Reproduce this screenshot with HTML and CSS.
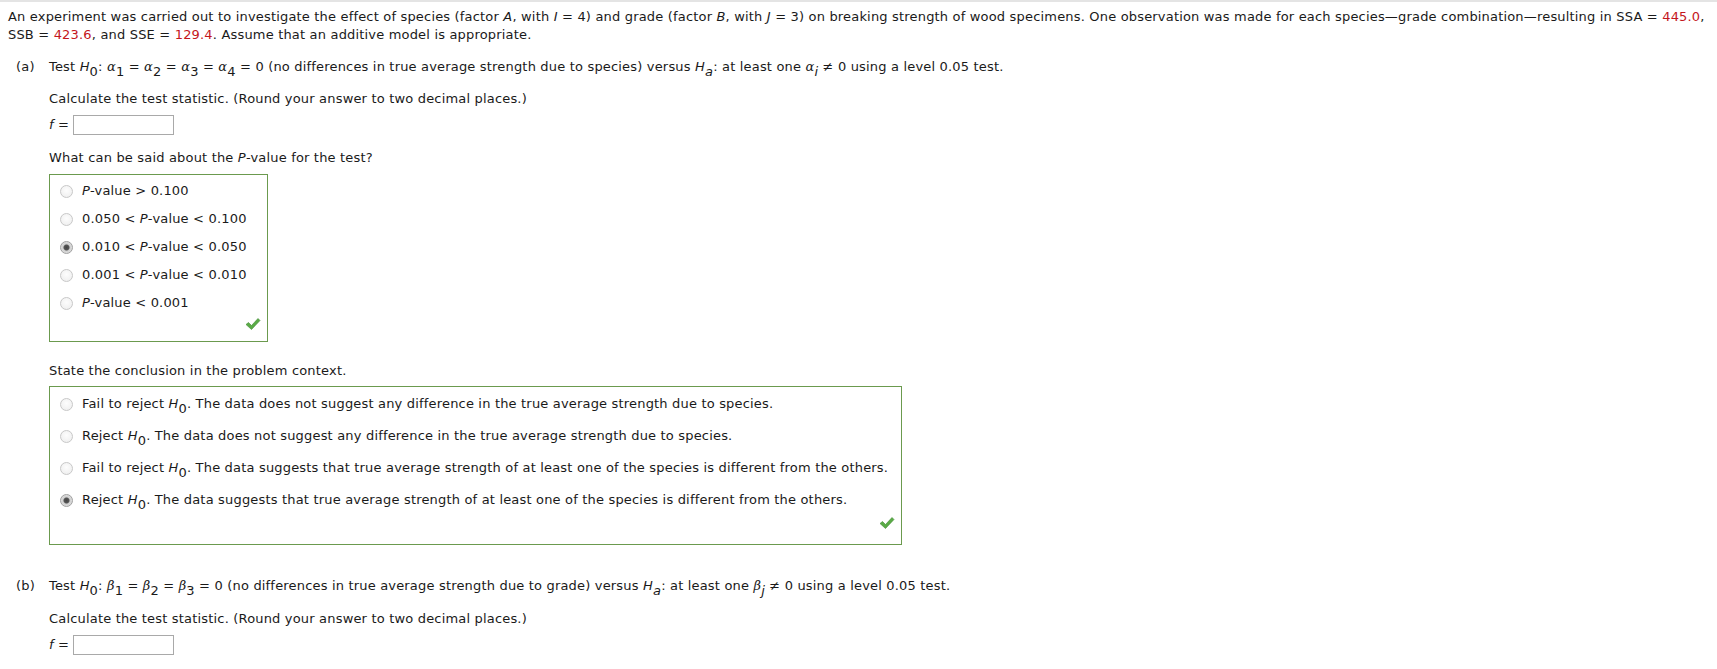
FILE: index.html
```html
<!DOCTYPE html>
<html>
<head>
<meta charset="utf-8">
<link rel="stylesheet" href="styles.css">
</head>
<body>
<div class="rule"></div>
<div class="page">
  <p class="intro">An experiment was carried out to investigate the effect of species (factor <i>A</i>, with <i>I</i> = 4) and grade (factor <i>B</i>, with <i>J</i> = 3) on breaking strength of wood specimens. One observation was made for each species—grade combination—resulting in SSA = <span class="red">445.0</span>,<br>SSB = <span class="red">423.6</span>, and SSE = <span class="red">129.4</span>. Assume that an additive model is appropriate.</p>

  <div class="part part-a">
    <div class="label">(a)</div>
    <div class="body">
      <p class="q">Test <i>H</i><sub>0</sub>: <i class="gk">α</i><sub>1</sub> = <i class="gk">α</i><sub>2</sub> = <i class="gk">α</i><sub>3</sub> = <i class="gk">α</i><sub>4</sub> = 0 (no differences in true average strength due to species) versus <i>H</i><sub><i>a</i></sub>: at least one <i class="gk">α</i><sub><i>i</i></sub> ≠ 0 using a level 0.05 test.</p>
      <p class="calc">Calculate the test statistic. (Round your answer to two decimal places.)</p>
      <div class="frow"><span class="flabel"><i>f</i> = </span><span class="input"></span></div>
      <p class="what">What can be said about the <i>P</i>-value for the test?</p>
      <div class="box box1">
        <div class="opt"><span class="radio"></span><span><i>P</i>-value &gt; 0.100</span></div>
        <div class="opt"><span class="radio"></span><span>0.050 &lt; <i>P</i>-value &lt; 0.100</span></div>
        <div class="opt"><span class="radio on"></span><span>0.010 &lt; <i>P</i>-value &lt; 0.050</span></div>
        <div class="opt"><span class="radio"></span><span>0.001 &lt; <i>P</i>-value &lt; 0.010</span></div>
        <div class="opt"><span class="radio"></span><span><i>P</i>-value &lt; 0.001</span></div>
        <div class="foot"><svg class="check" viewBox="0 0 16 14" width="16" height="14"><path d="M1 7.5 L3.5 5.5 L6.5 8.5 L13 1.5 L15 3.5 L6.5 12.5 Z" fill="#5aab46" stroke="#3f8a32" stroke-width="0.6" stroke-linejoin="round"/></svg></div>
      </div>
      <p class="state">State the conclusion in the problem context.</p>
      <div class="box box2">
        <div class="opt"><span class="radio"></span><span>Fail to reject <i>H</i><sub>0</sub>. The data does not suggest any difference in the true average strength due to species.</span></div>
        <div class="opt"><span class="radio"></span><span>Reject <i>H</i><sub>0</sub>. The data does not suggest any difference in the true average strength due to species.</span></div>
        <div class="opt"><span class="radio"></span><span>Fail to reject <i>H</i><sub>0</sub>. The data suggests that true average strength of at least one of the species is different from the others.</span></div>
        <div class="opt"><span class="radio on"></span><span>Reject <i>H</i><sub>0</sub>. The data suggests that true average strength of at least one of the species is different from the others.</span></div>
        <div class="foot"><svg class="check" viewBox="0 0 16 14" width="16" height="14"><path d="M1 7.5 L3.5 5.5 L6.5 8.5 L13 1.5 L15 3.5 L6.5 12.5 Z" fill="#5aab46" stroke="#3f8a32" stroke-width="0.6" stroke-linejoin="round"/></svg></div>
      </div>
    </div>
  </div>

  <div class="part part-b">
    <div class="label">(b)</div>
    <div class="body">
      <p class="q">Test <i>H</i><sub>0</sub>: <i class="gk">β</i><sub>1</sub> = <i class="gk">β</i><sub>2</sub> = <i class="gk">β</i><sub>3</sub> = 0 (no differences in true average strength due to grade) versus <i>H</i><sub><i>a</i></sub>: at least one <i class="gk">β</i><sub><i>j</i></sub> ≠ 0 using a level 0.05 test.</p>
      <p class="calc">Calculate the test statistic. (Round your answer to two decimal places.)</p>
      <div class="frow"><span class="flabel"><i>f</i> = </span><span class="input"></span></div>
    </div>
  </div>
</div>
</body>
</html>
```
FILE: styles.css
```css
html, body {
  margin: 0;
  padding: 0;
  background: #fff;
}
body {
  font-family: "DejaVu Sans", Verdana, sans-serif;
  font-size: 13px;
  letter-spacing: 0.18px;
  line-height: 18px;
  color: #1a1a1a;
}
p { margin: 0; }
.rule {
  height: 2px;
  background: #e4e4e4;
}
.page {
  padding: 0 8px;
}
.intro {
  margin-top: 6px;
}
.red { color: #c4161c; }
i { font-style: italic; }
sub {
  font-size: 13px;
  line-height: 0;
  vertical-align: -5px;
}
.gk { font-family: "DejaVu Serif", serif; }

.part {
  display: grid;
  grid-template-columns: 41px 1fr;
}
.label {
  padding-left: 8px;
}
.part-a { margin-top: 14px; }
.part-b { margin-top: 32px; }
.calc { margin-top: 14px; }
.part-b .calc { margin-top: 15px; }
.frow {
  margin-top: 7px;
  display: flex;
  align-items: center;
  height: 20px;
}
.flabel {
  white-space: pre;
  width: 24px;
}
.input {
  display: inline-block;
  width: 99px;
  height: 18px;
  border: 1px solid #a9a9a9;
  background: #fff;
}
.what { margin-top: 14px; }
.box {
  border: 1px solid #6b9a4e;
  margin-top: 7px;
}
.box1 {
  width: 217px;
  padding-top: 2px;
}
.box1 .opt { height: 28px; }
.box1 .foot { height: 24px; }
.state { margin-top: 20px; }
.box2 {
  width: 851px;
  margin-top: 6px;
  padding-top: 1px;
}
.box2 .opt { height: 32px; }
.box2 .foot { height: 28px; }
.opt {
  display: flex;
  align-items: center;
  padding-left: 10px;
}
.radio {
  width: 11px;
  height: 11px;
  border-radius: 50%;
  border: 1px solid #c8c8c8;
  background: radial-gradient(circle at 50% 40%, #fdfdfd 0%, #ececec 100%);
  margin-right: 9px;
  flex: none;
  position: relative;
}
.radio.on {
  border-color: #a0a0a0;
  background: radial-gradient(circle, #444 0, #555 2.5px, #cfcfcf 3.5px, #ececec 100%);
}
.foot {
  display: flex;
  justify-content: flex-end;
  align-items: flex-start;
  padding-right: 6px;
}
.check { display: block; }
```
